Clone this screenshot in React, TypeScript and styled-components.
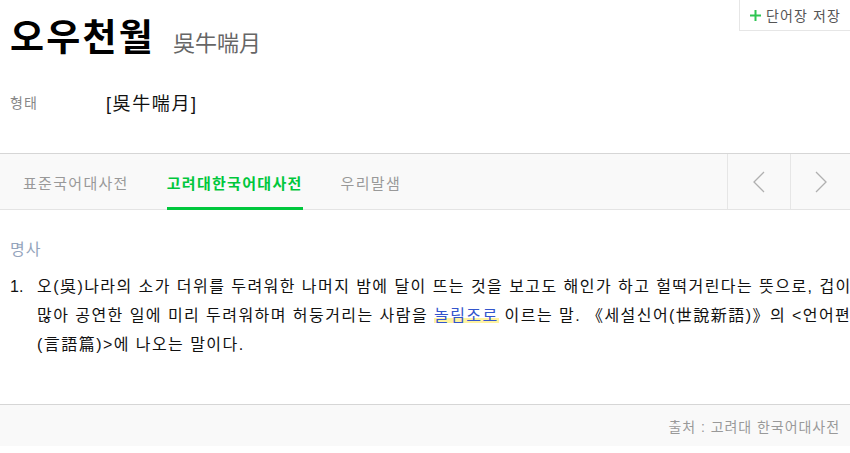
import React from "react";
import styled, { createGlobalStyle } from "styled-components";

const Global = createGlobalStyle`
  html, body { margin: 0; padding: 0; background: #fff; }
  body { font-family: "Liberation Sans", "Noto Sans CJK KR", sans-serif; color: #111; }
`;

const Page = styled.div`
  width: 850px;
  height: 453px;
  overflow: hidden;
  position: relative;
  background: #fff;
`;

const Header = styled.div`
  height: 153px;
  display: flex;
  flex-direction: column;
`;

const TitleRow = styled.div`
  display: flex;
  align-items: baseline;
  padding: 16px 0 0 10px;
  height: 62px;
  box-sizing: border-box;
`;

const Title = styled.h1`
  margin: 0;
  font-size: 37px;
  font-weight: 700;
  line-height: 46px;
  color: #000;
  letter-spacing: 2.2px;
`;

const Hanja = styled.span`
  margin-left: 18px;
  font-size: 22px;
  color: #666;
  line-height: 30px;
`;

const SaveButton = styled.button`
  position: absolute;
  top: -1px;
  left: 739px;
  width: 130px;
  height: 32px;
  border: 1px solid #e6e6e6;
  background: #fff;
  display: flex;
  align-items: center;
  gap: 5px;
  padding: 0 0 0 10px;
  font-family: inherit;
  font-size: 14px;
  letter-spacing: 1.1px;
  color: #555;
  cursor: pointer;
`;

const InfoRow = styled.div`
  display: flex;
  align-items: center;
  height: 30px;
  margin-top: 25px;
  padding-left: 10px;
`;

const InfoLabel = styled.span`
  width: 96px;
  font-size: 14px;
  letter-spacing: 1px;
  color: #888;
`;

const InfoValue = styled.span`
  font-size: 18px;
  letter-spacing: 1.6px;
  color: #111;
`;

const TabBar = styled.div`
  height: 55px;
  border-top: 1px solid #d6d6d6;
  border-bottom: 1px solid #e4e4e4;
  background: #f9f9f9;
  display: flex;
`;

const Tabs = styled.div`
  flex: 1;
  display: flex;
  padding-left: 23px;
  gap: 38px;
`;

const Tab = styled.div<{ $active?: boolean }>`
  display: flex;
  align-items: center;
  font-size: 15px;
  letter-spacing: 1.3px;
  font-weight: ${(p) => (p.$active ? 700 : 400)};
  color: ${(p) => (p.$active ? "#00c73c" : "#999")};
  box-shadow: ${(p) => (p.$active ? "inset 0 -3px 0 #00c73c" : "none")};
  margin-bottom: -1px;
  padding-top: 1px;
`;

const ArrowButton = styled.div<{ $w: number }>`
  width: ${(p) => p.$w}px;
  box-sizing: border-box;
  border-left: 1px solid #e6e6e6;
  display: flex;
  align-items: center;
  justify-content: center;
`;

const Content = styled.div`
  height: 194px;
  padding: 28px 0 0 10px;
  box-sizing: border-box;
`;

const POS = styled.div`
  font-size: 16px;
  letter-spacing: 1px;
  color: #94a4bc;
  line-height: 24px;
`;

const DefList = styled.ol`
  margin: 10px 0 0;
  padding: 0;
  list-style: none;
`;

const DefItem = styled.li`
  display: flex;
  font-size: 16px;
  line-height: 29px;
  color: #111;
`;

const Num = styled.span`
  width: 27px;
  flex: none;
`;

const DefText = styled.div`
  white-space: nowrap;
  letter-spacing: 1.45px;
`;

const Link = styled.span`
  color: #3355cc;
  background: linear-gradient(transparent 62%, #fff3a0 62%, #fff3a0 92%, transparent 92%);
`;

const Footer = styled.div`
  height: 41px;
  border-top: 1px solid #d6d6d6;
  background: #f9f9f9;
  display: flex;
  align-items: center;
  justify-content: flex-end;
  padding-right: 10px;
  font-size: 14px;
  letter-spacing: 0.95px;
  color: #999;
`;

const Chevron = ({ dir }: { dir: "left" | "right" }) => (
  <svg width="12" height="22" viewBox="0 0 12 22" fill="none">
    <path
      d={dir === "left" ? "M11 1 L1 11 L11 21" : "M1 1 L11 11 L1 21"}
      stroke="#b0b0b0"
      strokeWidth="1.3"
    />
  </svg>
);

const Plus = () => (
  <svg width="11" height="11" viewBox="0 0 11 11">
    <path d="M5.5 0 V11 M0 5.5 H11" stroke="#2ec552" strokeWidth="2" />
  </svg>
);

export default function App() {
  return (
    <Page>
      <Global />
      <Header>
        <TitleRow>
          <Title>오우천월</Title>
          <Hanja>吳牛喘月</Hanja>
        </TitleRow>
        <InfoRow>
          <InfoLabel>형태</InfoLabel>
          <InfoValue>[吳牛喘月]</InfoValue>
        </InfoRow>
      </Header>
      <SaveButton>
        <Plus />
        단어장 저장
      </SaveButton>
      <TabBar>
        <Tabs>
          <Tab>표준국어대사전</Tab>
          <Tab $active>고려대한국어대사전</Tab>
          <Tab>우리말샘</Tab>
        </Tabs>
        <ArrowButton $w={63}>
          <Chevron dir="left" />
        </ArrowButton>
        <ArrowButton $w={60}>
          <Chevron dir="right" />
        </ArrowButton>
      </TabBar>
      <Content>
        <POS>명사</POS>
        <DefList>
          <DefItem>
            <Num>1.</Num>
            <DefText>
              오(吳)나라의 소가 더위를 두려워한 나머지 밤에 달이 뜨는 것을 보고도 해인가 하고 헐떡거린다는 뜻으로, 겁이
              <br />
              많아 공연한 일에 미리 두려워하며 허둥거리는 사람을 <Link>놀림조로</Link> 이르는 말. 《세설신어(世說新語)》의 &lt;언어편
              <br />
              (言語篇)&gt;에 나오는 말이다.
            </DefText>
          </DefItem>
        </DefList>
      </Content>
      <Footer>출처 : 고려대 한국어대사전</Footer>
    </Page>
  );
}
